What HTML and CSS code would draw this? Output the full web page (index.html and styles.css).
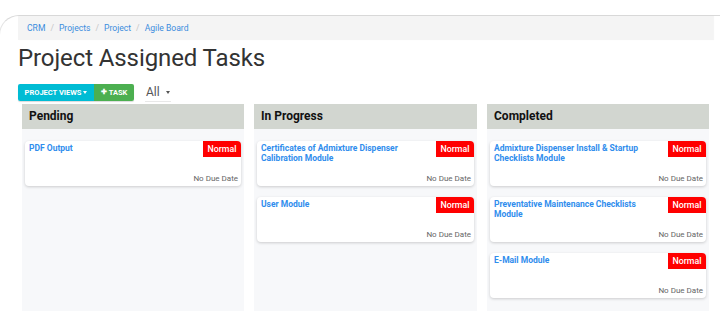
FILE: index.html
```html
<!DOCTYPE html>
<html>
<head>
<meta charset="utf-8">
<link rel="stylesheet" href="styles.css">
</head>
<body>
<div class="frame">
  <div class="page">
    <nav class="crumbs">
      <a>CRM</a><span class="sep">/</span><a>Projects</a><span class="sep">/</span><a>Project</a><span class="sep">/</span><a>Agile Board</a>
    </nav>
    <h1 class="title">Project Assigned Tasks</h1>
    <div class="toolbar">
      <div class="btn-group">
        <button class="btn btn-views">PROJECT VIEWS <span class="caret"></span></button>
        <button class="btn btn-task"><span class="plus">✚</span>TASK</button>
      </div>
      <div class="filter">All <span class="caret dark"></span></div>
    </div>
    <div class="board">
      <section class="col">
        <header class="col-head">Pending</header>
        <div class="col-body">
          <div class="card">
            <div class="card-top"><a class="card-title">PDF Output</a><span class="badge">Normal</span></div>
            <div class="card-foot">No Due Date</div>
          </div>
        </div>
      </section>
      <section class="col">
        <header class="col-head">In Progress</header>
        <div class="col-body">
          <div class="card">
            <div class="card-top"><a class="card-title">Certificates of Admixture Dispenser Calibration Module</a><span class="badge">Normal</span></div>
            <div class="card-foot">No Due Date</div>
          </div>
          <div class="card">
            <div class="card-top"><a class="card-title">User Module</a><span class="badge">Normal</span></div>
            <div class="card-foot">No Due Date</div>
          </div>
        </div>
      </section>
      <section class="col">
        <header class="col-head">Completed</header>
        <div class="col-body">
          <div class="card">
            <div class="card-top"><a class="card-title">Admixture Dispenser Install &amp; Startup Checklists Module</a><span class="badge">Normal</span></div>
            <div class="card-foot">No Due Date</div>
          </div>
          <div class="card">
            <div class="card-top"><a class="card-title">Preventative Maintenance Checklists Module</a><span class="badge">Normal</span></div>
            <div class="card-foot">No Due Date</div>
          </div>
          <div class="card">
            <div class="card-top"><a class="card-title">E-Mail Module</a><span class="badge">Normal</span></div>
            <div class="card-foot">No Due Date</div>
          </div>
        </div>
      </section>
    </div>
  </div>
</div>
</body>
</html>
```
FILE: styles.css
```css
html, body {
  margin: 0;
  padding: 0;
  background: #fff;
  font-family: Roboto, "Liberation Sans", Arial, sans-serif;
  width: 720px;
  height: 333px;
  overflow: hidden;
}
.frame {
  margin-top: 15px;
  margin-left: -1px;
  border-top: 1px solid #d9d9d9;
  border-left: 1px solid #e6e6e6;
  border-top-left-radius: 20px;
  height: 320px;
}
.page {
  padding-left: 18px;
  width: 695px;
}
.crumbs {
  background: #f4f4f4;
  height: 24px;
  display: flex;
  align-items: center;
  padding-left: 9px;
  font-size: 8.6px;
  box-shadow: 1px 0 1px rgba(0,0,0,0.04);
}
.crumbs a { color: #3c8dde; }
.crumbs .sep { color: #c6c6c6; margin: 0 5px; }
.title {
  margin: 3px 0 0 0;
  font-size: 24px;
  font-weight: 400;
  color: #333;
  line-height: 30px;
  letter-spacing: -0.1px;
}
.toolbar {
  display: flex;
  align-items: center;
  margin-top: 10px;
  height: 18px;
}
.btn-group { display: flex; border-radius: 2px; overflow: hidden; box-shadow: 0 1px 1px rgba(0,0,0,0.15); }
.btn {
  border: 0;
  margin: 0;
  height: 17px;
  color: #fff;
  font-family: Roboto, "Liberation Sans", Arial, sans-serif;
  font-size: 7.5px;
  font-weight: 700;
  display: flex;
  align-items: center;
  padding: 0;
}
.btn-views { background: #00bcd4; width: 76px; justify-content: center; }
.btn-task { background: #4caf50; width: 40px; justify-content: center; }
.plus { font-size: 7px; margin-right: 2px; }
.caret {
  display: inline-block;
  width: 0; height: 0;
  border-left: 2.5px solid transparent;
  border-right: 2.5px solid transparent;
  border-top: 3px solid #fff;
  margin-left: 2px;
}
.caret.dark { border-top-color: #555; margin-left: 3px; vertical-align: 2px; }
.filter {
  margin-left: 11px;
  font-size: 12px;
  color: #555;
  height: 18px;
  line-height: 18px;
  padding: 0 1px;
  border-bottom: 1px solid #e8e8e8;
}
.board {
  display: grid;
  grid-template-columns: 222px 223px 222px;
  column-gap: 10px;
  margin-left: 4px;
  margin-top: 3px;
  align-items: stretch;
}
.col {
  background: #f7f8fa;
  display: flex;
  flex-direction: column;
}
.col-head {
  background: #d2d6d0;
  height: 25px;
  line-height: 25px;
  padding-left: 7px;
  font-size: 12px;
  font-weight: 700;
  color: #111;
}
.col-body {
  padding: 12px 3px 13px 3px;
  display: flex;
  flex-direction: column;
  gap: 11px;
}
.card {
  background: #fff;
  border-radius: 4px;
  box-shadow: 0 1px 3px rgba(0,0,0,0.18);
  height: 45px;
  display: flex;
  flex-direction: column;
  justify-content: space-between;
  overflow: hidden;
}
.card-top {
  display: flex;
  justify-content: space-between;
  align-items: flex-start;
}
.card-title {
  color: #2f8ded;
  font-size: 8.5px;
  font-weight: 700;
  line-height: 9.5px;
  padding: 3px 0 0 4px;
  max-width: 150px;
}
.badge {
  background: #ff0000;
  color: #fff;
  font-size: 8.8px;
  font-weight: 500;
  width: 38px;
  height: 16px;
  line-height: 16px;
  text-align: center;
  flex-shrink: 0;
}
.card-foot {
  text-align: right;
  font-size: 8px;
  color: #666;
  padding: 0 3px 3px 0;
}
```
